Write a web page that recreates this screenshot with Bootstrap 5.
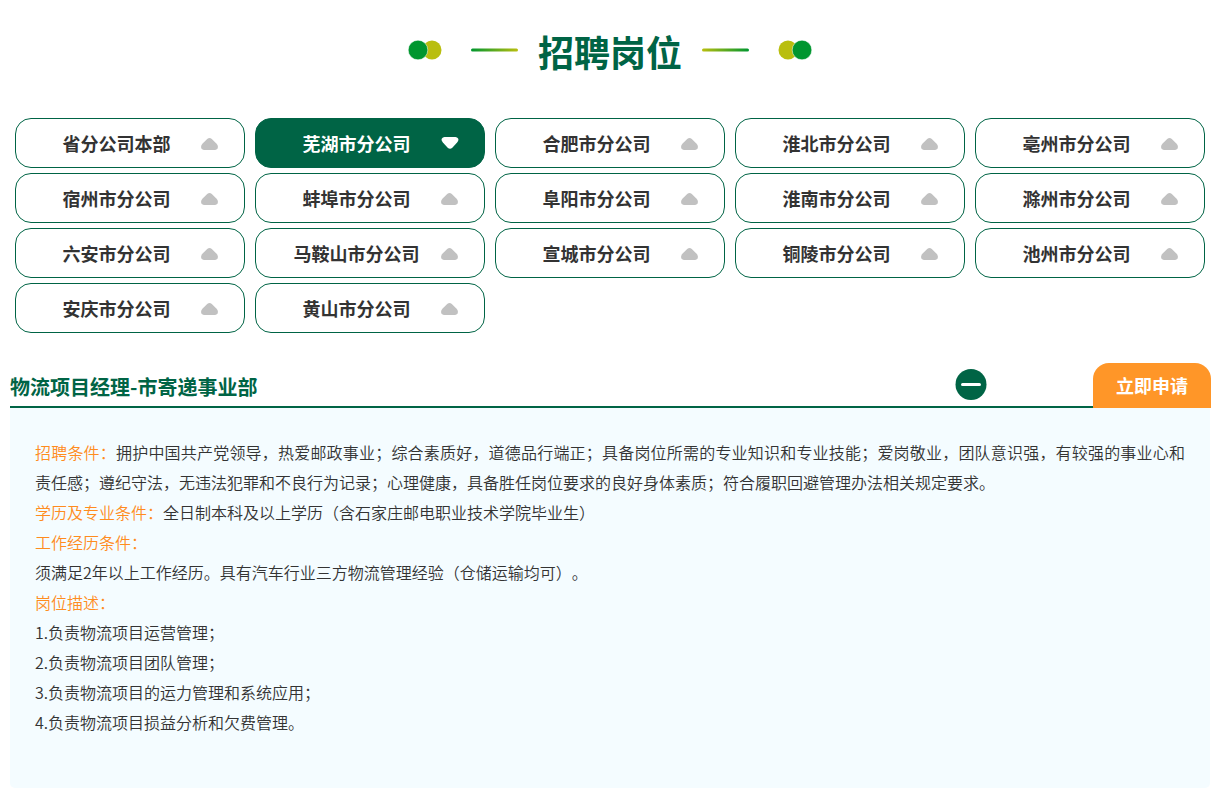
<!DOCTYPE html>
<html lang="zh-CN">
<head>
<meta charset="utf-8">
<meta name="viewport" content="width=device-width, initial-scale=1">
<title>招聘岗位</title>
<link href="https://cdn.jsdelivr.net/npm/bootstrap@5.3.0/dist/css/bootstrap.min.css" rel="stylesheet">
<style>
  :root { --brand: #006445; --accent: #ff9628; --panel: #f4fcff; }
  body { font-family: "Noto Sans CJK SC", sans-serif; color: #333; background: #fff; text-spacing-trim: space-all; }
  .page { max-width: 1216px; padding: 0 6px 0 10px; }
  .page-head { gap: 20px; padding: 24px 0 40px; }
  .page-head svg { overflow: visible; }
  .page-title { color: var(--brand); font-size: 36px; line-height: 54px; font-weight: 700; }
  .company-grid { display: grid; grid-template-columns: repeat(auto-fill, minmax(210px, 1fr)); gap: 5px 10px; padding: 0 5px; }
  .company { height: 50px; padding: 0 25px 0 16px; border: 1px solid var(--brand); border-radius: 16px; color: #333; font-size: 18px; line-height: 27px; font-weight: 700; }
  .company:hover { border-color: var(--brand); color: var(--brand); }
  .company.active { background: var(--brand); border-color: var(--brand); color: #fff; }
  .company svg { fill: #c1c1c1; }
  .company.active svg { fill: #fff; }
  .job-head { height: 45px; margin-top: 30px; border-bottom: 2px solid var(--brand); }
  .job-name { color: var(--brand); font-size: 20px; line-height: 30px; font-weight: 700; }
  .toggle-job { margin-right: 106px; }
  .apply { width: 118px; height: 45px; margin: 0 -1px -2px 0; background: var(--accent); color: #fff; font-size: 18px; font-weight: 700; border-radius: 16px 16px 0 0; }
  .apply:hover { background: var(--accent); color: #fff; }
  .job-body { min-height: 380px; padding: 29px 25px; background: var(--panel); border-radius: 0 0 5px 5px; font-size: 16px; line-height: 30px; font-weight: 350; }
  .job-body p { margin: 0; text-align: justify; }
  .item-label { color: #ff8c1e; }
</style>
</head>
<body>
<svg class="d-none" aria-hidden="true">
  <symbol id="up" viewBox="0 0 18 14"><path d="M6.200 3Q8.500 1.200 10.800 3L15.600 7.800Q17.600 10 16.600 12.300Q15.700 14 14 14H3Q1.300 14 .4 12.300Q-.6 10 1.400 7.800Z"/></symbol>
  <symbol id="down" viewBox="0 0 18 14"><path d="M6.700 11.800Q9 13.700 11.300 11.800L16.100 6.600Q18.100 4.400 17.100 2.500Q16.200 1 14.500 1H3.500Q1.800 1 .9 2.500Q-.1 4.400 1.900 6.600Z"/></symbol>
</svg>
<main class="page mx-auto">
  <header class="page-head d-flex justify-content-center align-items-center">
    <svg width="110" height="20" viewBox="0 0 110 20" aria-hidden="true">
      <defs><linearGradient id="fade"><stop stop-color="#00962f"/><stop offset="1" stop-color="#b9be0f"/></linearGradient></defs>
      <circle cx="24" cy="9" r="9.500" fill="#b9be0f"/><circle cx="10" cy="9" r="9.800" fill="#00962f" stroke="#fff" stroke-width=".5"/>
      <rect x="63" y="7.500" width="47" height="3" rx="1.500" fill="url(#fade)"/>
    </svg>
    <h1 class="page-title mb-0">招聘岗位</h1>
    <svg width="110" height="20" viewBox="0 0 110 20" aria-hidden="true">
      <defs><linearGradient id="fade2"><stop stop-color="#b9be0f"/><stop offset="1" stop-color="#00962f"/></linearGradient></defs>
      <rect x="0" y="7.500" width="47" height="3" rx="1.500" fill="url(#fade2)"/>
      <circle cx="86" cy="9" r="9.500" fill="#b9be0f"/><circle cx="100" cy="9" r="9.800" fill="#00962f" stroke="#fff" stroke-width=".5"/>
    </svg>
  </header>

  <nav class="company-grid" aria-label="分公司">
    <button type="button" class="company btn d-flex align-items-center"><span class="flex-grow-1">省分公司本部</span><svg width="18" height="14"><use href="#up"/></svg></button>
    <button type="button" class="company btn active d-flex align-items-center"><span class="flex-grow-1">芜湖市分公司</span><svg width="18" height="14"><use href="#down"/></svg></button>
    <button type="button" class="company btn d-flex align-items-center"><span class="flex-grow-1">合肥市分公司</span><svg width="18" height="14"><use href="#up"/></svg></button>
    <button type="button" class="company btn d-flex align-items-center"><span class="flex-grow-1">淮北市分公司</span><svg width="18" height="14"><use href="#up"/></svg></button>
    <button type="button" class="company btn d-flex align-items-center"><span class="flex-grow-1">亳州市分公司</span><svg width="18" height="14"><use href="#up"/></svg></button>
    <button type="button" class="company btn d-flex align-items-center"><span class="flex-grow-1">宿州市分公司</span><svg width="18" height="14"><use href="#up"/></svg></button>
    <button type="button" class="company btn d-flex align-items-center"><span class="flex-grow-1">蚌埠市分公司</span><svg width="18" height="14"><use href="#up"/></svg></button>
    <button type="button" class="company btn d-flex align-items-center"><span class="flex-grow-1">阜阳市分公司</span><svg width="18" height="14"><use href="#up"/></svg></button>
    <button type="button" class="company btn d-flex align-items-center"><span class="flex-grow-1">淮南市分公司</span><svg width="18" height="14"><use href="#up"/></svg></button>
    <button type="button" class="company btn d-flex align-items-center"><span class="flex-grow-1">滁州市分公司</span><svg width="18" height="14"><use href="#up"/></svg></button>
    <button type="button" class="company btn d-flex align-items-center"><span class="flex-grow-1">六安市分公司</span><svg width="18" height="14"><use href="#up"/></svg></button>
    <button type="button" class="company btn d-flex align-items-center"><span class="flex-grow-1">马鞍山市分公司</span><svg width="18" height="14"><use href="#up"/></svg></button>
    <button type="button" class="company btn d-flex align-items-center"><span class="flex-grow-1">宣城市分公司</span><svg width="18" height="14"><use href="#up"/></svg></button>
    <button type="button" class="company btn d-flex align-items-center"><span class="flex-grow-1">铜陵市分公司</span><svg width="18" height="14"><use href="#up"/></svg></button>
    <button type="button" class="company btn d-flex align-items-center"><span class="flex-grow-1">池州市分公司</span><svg width="18" height="14"><use href="#up"/></svg></button>
    <button type="button" class="company btn d-flex align-items-center"><span class="flex-grow-1">安庆市分公司</span><svg width="18" height="14"><use href="#up"/></svg></button>
    <button type="button" class="company btn d-flex align-items-center"><span class="flex-grow-1">黄山市分公司</span><svg width="18" height="14"><use href="#up"/></svg></button>
  </nav>

  <section>
    <div class="job-head d-flex align-items-center">
      <h2 class="job-name mb-0 me-auto pt-1">物流项目经理-市寄递事业部</h2>
      <button type="button" class="toggle-job btn p-0 border-0 d-flex" aria-label="收起" aria-controls="job" aria-expanded="true">
        <svg width="32" height="32" viewBox="0 0 32 32"><circle cx="16" cy="15.500" r="15.500" fill="#006445"/><rect x="6" y="14" width="20" height="3" rx="1.500" fill="#fff"/></svg>
      </button>
      <button type="button" class="apply btn border-0 p-0 align-self-start">立即申请</button>
    </div>
    <div class="job-body" id="job">
      <p><span class="item-label">招聘条件：</span><span>拥护中国共产党领导，热爱邮政事业；综合素质好，道德品行端正；具备岗位所需的专业知识和专业技能；爱岗敬业，团队意识强，有较强的事业心和责任感；遵纪守法，无违法犯罪和不良行为记录；心理健康，具备胜任岗位要求的良好身体素质；符合履职回避管理办法相关规定要求。</span></p>
      <p><span class="item-label">学历及专业条件：</span><span>全日制本科及以上学历（含石家庄邮电职业技术学院毕业生）</span></p>
      <p><span class="item-label">工作经历条件：</span></p>
      <p>须满足2年以上工作经历。具有汽车行业三方物流管理经验（仓储运输均可）。</p>
      <p><span class="item-label">岗位描述：</span></p>
      <p>1.负责物流项目运营管理；</p>
      <p>2.负责物流项目团队管理；</p>
      <p>3.负责物流项目的运力管理和系统应用；</p>
      <p>4.负责物流项目损益分析和欠费管理。</p>
    </div>
  </section>
</main>
<script src="https://cdn.jsdelivr.net/npm/bootstrap@5.3.0/dist/js/bootstrap.bundle.min.js"></script>
</body>
</html>
